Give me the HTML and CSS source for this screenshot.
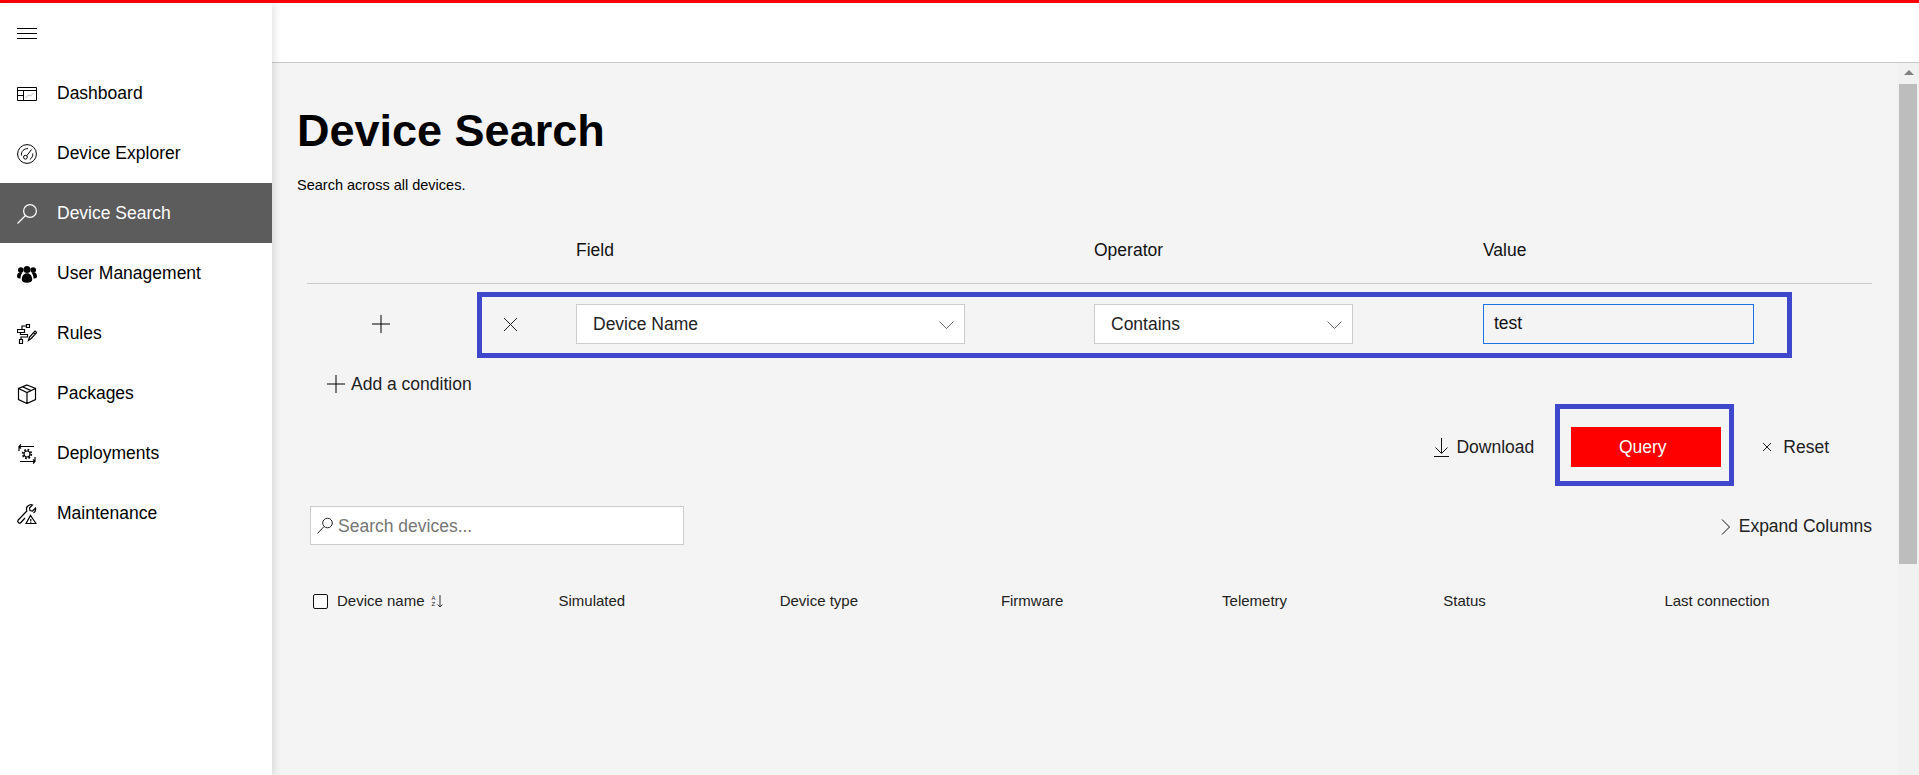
FILE: index.html
```html
<!DOCTYPE html>
<html lang="en">
<head>
  <meta charset="UTF-8" />
  <meta name="viewport" content="width=device-width, initial-scale=1.0"/>
  <title>Device Search</title>
  <link rel="stylesheet" href="styles.css">
</head>
<body>

  <div class="topbar"></div>

  <div class="shell">
    <aside class="sidebar">
      <div class="menu-toggle">
        <svg width="20" height="12" viewBox="0 0 20 12" fill="none" stroke="#000"><path d="M0 .5h20M0 5.500h20M0 10.500h20"/></svg>
      </div>
      <nav>
        <a class="nav-item">
          <svg class="nav-icon" viewBox="0 0 20 20" fill="none" stroke="#000"><path d="M.5 3.500h19v13H.5zM.5 6.500h19M6.500 6.500v10M.5 11.500h6"/><path d="M8.500 14l3-3 2 1 3-3" stroke="#b5b5b5"/></svg>
          Dashboard
        </a>
        <a class="nav-item">
          <svg class="nav-icon" viewBox="0 0 20 20" fill="none" stroke="#000"><circle cx="10" cy="10" r="9.400"/><circle cx="8.400" cy="13.200" r="1.900"/><path d="M9.700 11.800l4.800-6.300M4.400 11.500C4 7.500 7 4.300 11 4.600M15.800 9.500c.2 2.500-.8 4.500-3 6"/></svg>
          Device Explorer
        </a>
        <a class="nav-item active">
          <svg class="nav-icon" viewBox="0 0 20 20" fill="none" stroke="#fff" stroke-width="1.200"><circle cx="13" cy="7" r="6.400"/><path d="M8.500 11.500L.5 19.500"/></svg>
          Device Search
        </a>
        <a class="nav-item">
          <svg class="nav-icon" viewBox="0 0 20 20" fill="#000"><circle cx="10" cy="5.500" r="3.500"/><circle cx="3.800" cy="6" r="2.800"/><circle cx="16.200" cy="6" r="2.800"/><path d="M4.800 15.500c0-4 2.200-6.300 5.200-6.300s5.200 2.300 5.200 6.300c0 2.200-2.200 3.300-5.200 3.300s-5.200-1.100-5.200-3.300z"/><path d="M0 12.500c0-2.700 1.400-4.200 3.600-4.200.7 0 1.300.1 1.800.5-1 1-1.900 3-1.900 5.700C1.500 14.500 0 14 0 12.500zM20 12.500c0-2.700-1.400-4.200-3.600-4.200-.7 0-1.300.1-1.800.5 1 1 1.900 3 1.900 5.700 2 0 3.500-.5 3.500-2z"/></svg>
          User Management
        </a>
        <a class="nav-item">
          <svg class="nav-icon" viewBox="0 0 20 20" fill="none" stroke="#000" stroke-width="1.200"><path d="M9.500.5h3v3h-3zM.5 5.500h7v3h-7zM2.500 15.500h3v4h-3zM9.500 2H5v3.500M3.500 8.500v2h7v2.500H4v2.500"/><path d="M11.500 16.500l1-3.500 5.500-6 1.700 1.500-5.500 6zM16.500 8.500l1.700 1.500"/></svg>
          Rules
        </a>
        <a class="nav-item">
          <svg class="nav-icon" viewBox="0 0 20 20" fill="none" stroke="#000" stroke-width="1.200"><path d="M10 1l8.500 3.500v11L10 19.500 1.500 15.500v-11zM1.500 4.500L10 8.500l8.500-4M10 8.500v11M5.500 2.800l8.500 3.800"/></svg>
          Packages
        </a>
        <a class="nav-item">
          <svg class="nav-icon" viewBox="0 0 20 20" fill="none" stroke="#000" stroke-width="1.200"><circle cx="10" cy="10" r="3"/><circle cx="10" cy="10" r="4.300" stroke-width="1.800" stroke-dasharray="1.700 1.680"/><path d="M2 7V2.500h15M2 2.500L4 .5M2 2.500l2 2M18 13v4.500H3M18 17.500l-2-2M18 17.500l-2 2"/></svg>
          Deployments
        </a>
        <a class="nav-item">
          <svg class="nav-icon" viewBox="0 0 20 20" fill="none" stroke="#000" stroke-width="1.200"><path d="M.8 16.500l9-9.500c-.8-2.500.3-5 2.700-6 1-.4 2-.4 3 0l-3 3 .5 2.500 2.500.5 3-3c.4 2-.3 4-2 5"/><path d="M.8 16.500c-.6 1.200 1.400 3.200 2.700 2.500L8 14"/><path d="M9 19.500l4.500-8 5.500 8zM13.800 15v2.500M13.800 18v.8"/></svg>
          Maintenance
        </a>
      </nav>
    </aside>

    <div class="main">
      <header class="header"></header>

      <div class="content">
        <div class="page">
          <h1>Device Search</h1>
          <p class="subtitle">Search across all devices.</p>

          <div class="filters">
            <div class="filter-head">
              <span></span>
              <span>Field</span>
              <span>Operator</span>
              <span>Value</span>
            </div>

            <div class="filter-row">
              <svg class="row-add" width="18" height="18" viewBox="0 0 18 18" stroke="#000" fill="none"><path d="M0 9h18M9 0v18"/></svg>
              <div class="condition highlight">
                <svg class="row-remove" width="15" height="15" viewBox="0 0 15 15" stroke="#222" fill="none"><path d="M1 1l13 13M14 1L1 14"/></svg>
                <div class="select field-select">
                  Device Name
                  <svg width="15" height="8" viewBox="0 0 15 8" stroke="#666" fill="none"><path d="M.5.5l7 7 7-7"/></svg>
                </div>
                <div class="select operator-select">
                  Contains
                  <svg width="15" height="8" viewBox="0 0 15 8" stroke="#666" fill="none"><path d="M.5.5l7 7 7-7"/></svg>
                </div>
                <input class="value-input" type="text" value="test">
              </div>
            </div>

            <a class="add-condition">
              <svg width="18" height="18" viewBox="0 0 18 18" stroke="#000" fill="none"><path d="M0 9h18M9 0v18"/></svg>
              Add a condition
            </a>

            <div class="actions">
              <a class="action download">
                <svg width="17" height="19" viewBox="0 0 17 19" stroke="#111" fill="none"><path d="M8.500 0v15M2.500 9.500l6 6 6-6M1 18.500h15"/></svg>
                Download
              </a>
              <div class="query-wrap highlight">
                <button class="query-btn" type="button">Query</button>
              </div>
              <a class="action reset">
                <svg width="10" height="10" viewBox="0 0 10 10" stroke="#222" fill="none"><path d="M1 1l8 8M9 1L1 9"/></svg>
                Reset
              </a>
            </div>
          </div>

          <div class="toolbar">
            <div class="search-box">
              <svg width="16" height="17" viewBox="0 0 16 17" stroke="#222" fill="none"><circle cx="10.500" cy="6" r="4.800"/><path d="M7 9.500L.5 16.500"/></svg>
              <input type="text" placeholder="Search devices...">
            </div>
            <a class="expand">
              <svg width="9" height="16" viewBox="0 0 9 16" stroke="#111" fill="none"><path d="M1 .5l7.500 7.500L1 15.500"/></svg>
              Expand Columns
            </a>
          </div>

          <div class="table-head">
            <div class="first-col">
              <span class="checkbox"></span>
              Device name
              <span class="sort-icon">
                <span class="sort-letters"><b>A</b><b>Z</b></span>
                <svg width="6" height="13" viewBox="0 0 6 13" stroke="#333" fill="none"><path d="M3 0v12M.5 9.500L3 12l2.500-2.500"/></svg>
              </span>
            </div>
            <div>Simulated</div>
            <div>Device type</div>
            <div>Firmware</div>
            <div>Telemetry</div>
            <div>Status</div>
            <div>Last connection</div>
          </div>
        </div>

        <div class="scrollbar">
          <div class="scroll-arrow"></div>
          <div class="scroll-thumb"></div>
        </div>
      </div>
    </div>
  </div>

</body>
</html>
```

FILE: styles.css
```css
* {
  box-sizing: border-box;
}

html, body {
  height: 100%;
}

body {
  margin: 0;
  font-family: "Liberation Sans", Arial, sans-serif;
  font-size: 17.5px;
  color: #111;
  background: #f4f4f4;
  overflow: hidden;
}

.topbar {
  height: 3px;
  background: #f00;
}

.shell {
  display: flex;
  height: 772px;
}

/* sidebar */
.sidebar {
  position: relative;
  width: 272px;
  flex-shrink: 0;
  background: #fff;
  box-shadow: 2px 0 8px rgba(0,0,0,0.12);
}

.menu-toggle {
  height: 60px;
  padding: 25px 0 0 17px;
}

.menu-toggle svg {
  display: block;
}

.nav-item {
  display: flex;
  align-items: center;
  height: 60px;
  padding: 1px 0 0 17px;
  color: #000;
}

.nav-icon {
  width: 20px;
  height: 20px;
  margin-right: 20px;
  flex-shrink: 0;
}

.nav-item.active {
  background: #5c5c5c;
  color: #fff;
}

/* main */
.main {
  flex: 1;
  display: flex;
  flex-direction: column;
  min-width: 0;
}

.header {
  height: 60px;
  background: #fff;
  border-bottom: 1px solid #c8c8c8;
}

.content {
  flex: 1;
  display: flex;
  min-height: 0;
}

.page {
  flex: 1;
  padding: 44px 25px 0 25px;
  min-width: 0;
}

h1 {
  margin: 0;
  font-size: 45px;
  line-height: 48px;
  font-weight: bold;
  color: #000;
}

.subtitle {
  margin: 22px 0 0;
  font-size: 14.500px;
  line-height: 16px;
  color: #000;
}

.filters {
  margin-left: 10px;
}

.filter-head {
  display: grid;
  grid-template-columns: 269px 518px 389px 1fr;
  height: 91px;
  padding-top: 45px;
  line-height: 24px;
  border-bottom: 1px solid #ccc;
}

.filter-row {
  display: flex;
  align-items: center;
  margin-top: 8px;
}

.row-add {
  margin: 0 87px 2px 65px;
  flex-shrink: 0;
}

.highlight {
  border: 5px solid #3f48cc;
}

.condition {
  display: flex;
  align-items: center;
  width: 1315px;
  height: 66px;
  padding: 0 0 2px 21px;
}

.row-remove {
  margin-right: 58px;
  flex-shrink: 0;
}

.select {
  display: flex;
  align-items: center;
  justify-content: space-between;
  height: 40px;
  background: #fff;
  border: 1px solid #ccc;
  color: #222;
}

.field-select {
  width: 389px;
  margin-right: 129px;
  padding: 1px 10px 0 16px;
}

.operator-select {
  width: 259px;
  margin-right: 130px;
  padding: 1px 10px 0 16px;
}

.value-input {
  width: 271px;
  height: 40px;
  padding: 0 10px 2px;
  background: #f4f4f4;
  border: 1px solid #1a73e8;
  border-radius: 0;
  outline: none;
  font: inherit;
  color: #111;
}

.add-condition {
  display: flex;
  align-items: center;
  gap: 6px;
  height: 24px;
  margin: 14px 0 0 20px;
  color: #222;
}

.actions {
  display: flex;
  align-items: center;
  justify-content: flex-end;
  margin-top: 8px;
  padding-right: 43px;
}

.action {
  display: flex;
  align-items: center;
  margin-top: 4px;
  color: #222;
}

.download {
  gap: 6px;
  margin-right: 21px;
}

.reset {
  gap: 11px;
  margin-left: 28px;
}

.query-wrap {
  width: 179px;
  height: 82px;
  padding: 18px 0 0 11px;
}

.query-btn {
  display: block;
  width: 150px;
  height: 40px;
  padding: 0 7px 0 0;
  background: #f00;
  color: #fff;
  border: 0;
  font: inherit;
}

/* table toolbar */
.toolbar {
  display: flex;
  align-items: center;
  justify-content: space-between;
  margin: 20px 0 0 13px;
}

.search-box {
  display: flex;
  align-items: center;
  width: 374px;
  height: 39px;
  padding-left: 6px;
  background: #fff;
  border: 1px solid #ccc;
}

.search-box input {
  flex: 1;
  min-width: 0;
  margin-left: 5px;
  padding: 2px 0 0;
  border: 0;
  outline: none;
  background: none;
  font: inherit;
  color: #111;
}

.search-box input::placeholder {
  color: #767676;
  opacity: 1;
}

.expand {
  display: flex;
  align-items: center;
  gap: 9px;
  padding-top: 2px;
  color: #222;
}

.table-head {
  display: grid;
  grid-template-columns: 245.500px repeat(6, 221.200px);
  margin: 46px 0 0 16px;
  font-size: 15px;
  line-height: 20px;
  color: #222;
}

.first-col {
  display: flex;
  align-items: center;
}

.checkbox {
  width: 15px;
  height: 15px;
  margin-right: 9px;
  border: 1px solid #111;
  border-radius: 2px;
  background: #fff;
}

.sort-icon {
  display: flex;
  align-items: center;
  gap: 1px;
  margin-left: 7px;
}

.sort-letters {
  display: flex;
  flex-direction: column;
  font-size: 6px;
  line-height: 6px;
}

.sort-letters b {
  font-weight: normal;
}

/* scrollbar */
.scrollbar {
  width: 22px;
  flex-shrink: 0;
  padding-left: 2px;
  background: #f1f1f1;
}

.scroll-arrow {
  width: 0;
  height: 0;
  margin: 7px auto 0;
  border-left: 5px solid transparent;
  border-right: 5px solid transparent;
  border-bottom: 5px solid #808080;
}

.scroll-thumb {
  width: 18px;
  height: 480px;
  margin-top: 9px;
  background: #bdbdbd;
}
```
